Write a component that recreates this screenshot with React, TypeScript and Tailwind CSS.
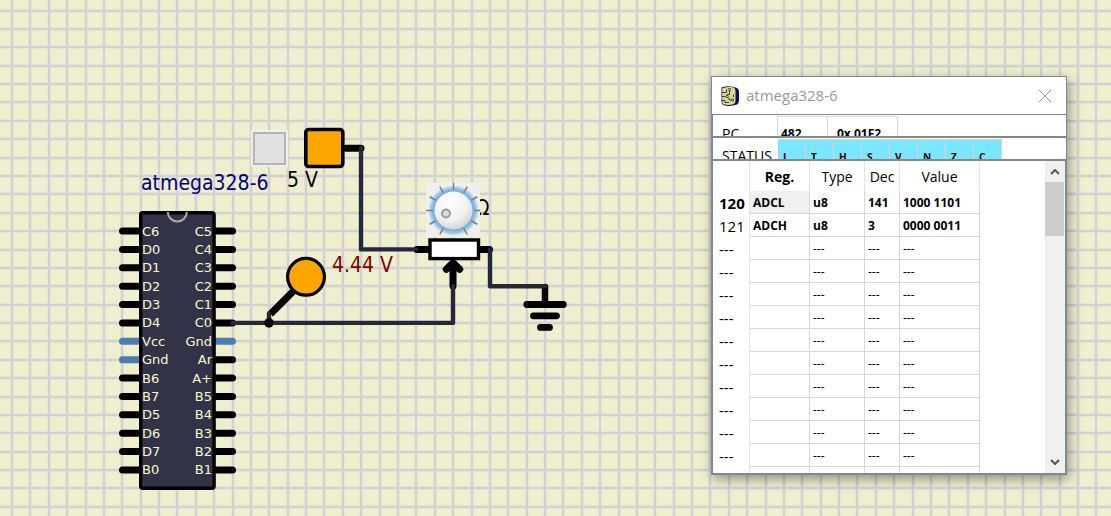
import React from "react";

const PITCH = 18.38;
const FIRST_PIN_Y = 231;

const leftPins = ["C6", "D0", "D1", "D2", "D3", "D4", "Vcc", "Gnd", "B6", "B7", "D5", "D6", "D7", "B0"];
const rightPins = ["C5", "C4", "C3", "C2", "C1", "C0", "Gnd", "Ar", "A+", "B5", "B4", "B3", "B2", "B1"];
const flags = ["I", "T", "H", "S", "V", "N", "Z", "C"];

type Register = { addr: string; name: string; type: string; dec: string; value: string };

const blank: Register = { addr: "---", name: "", type: "---", dec: "---", value: "---" };
const registers: Register[] = [
  { addr: "120", name: "ADCL", type: "u8", dec: "141", value: "1000 1101" },
  { addr: "121", name: "ADCH", type: "u8", dec: "3", value: "0000 0011" },
  ...Array.from({ length: 10 }, () => blank),
  { addr: "", name: "", type: "", dec: "", value: "" },
];

const pinY = (index: number) => FIRST_PIN_Y + index * PITCH;
const pinColor = (label: string) => (label === "Vcc" || label === "Gnd" ? "#4b7bb0" : "#000");

function Chip() {
  return (
    <g className="font-['DejaVu_Sans',sans-serif]">
      <g strokeWidth="7" strokeLinecap="round">
        {leftPins.map((p, i) => (
          <path key={i} d={`M142 ${pinY(i)}H122.5`} stroke={pinColor(p)} />
        ))}
        {rightPins.map((p, i) => (
          <path key={i} d={`M212 ${pinY(i)}H232.5`} stroke={pinColor(p)} />
        ))}
      </g>
      <rect x="140.7" y="212.7" width="73.4" height="275.6" rx="2" fill="#333347" stroke="#000" strokeWidth="3.4" />
      <path d="M167.8 212a9.5 9.5 0 0 0 19 0" fill="none" stroke="#b3ad9b" strokeWidth="2" />
      <g fill="#fafad2" className="text-[13px]">
        {leftPins.map((p, i) => (
          <text key={i} x="142" y={Math.floor(pinY(i)) + 5}>
            {p}
          </text>
        ))}
        {rightPins.map((p, i) => (
          <text key={i} x="212" y={Math.floor(pinY(i)) + 5} textAnchor="end">
            {p}
          </text>
        ))}
      </g>
    </g>
  );
}

function Grid() {
  const columns = Array.from({ length: 220 }, (_, i) => Math.round(11 + (i - 0) * PITCH));
  const rows = Array.from({ length: 120 }, (_, i) => Math.round(9.6 + (i - 0) * PITCH));
  const lines = columns.map((x) => `M${x + 1} 0V2200`).join("") + rows.map((y) => `M0 ${y + 1}H4000`).join("");
  const halo = columns.map((x) => `M${x + 1} 0V2200`).join("") + rows.map((y) => `M0 ${y + 1}H4000`).join("");
  return (
    <g fill="none" shapeRendering="crispEdges">
      <path d={halo} stroke="#e5e5d0" strokeWidth="4" />
      <path d={lines} stroke="#d2d2d2" strokeWidth="2" />
    </g>
  );
}

function Knob() {
  const angles = Array.from({ length: 11 }, (_, i) => -150 + i * 30);
  return (
    <svg viewBox="0 0 54 54" className="block size-[54px]" aria-hidden="true">
      <defs>
        <radialGradient id="glow">
          <stop offset="0.74" stopColor="#6dabd9" />
          <stop offset="0.88" stopColor="#9cc6e4" />
          <stop offset="1" stopColor="#efefef" />
        </radialGradient>
        <radialGradient id="dial" cx="0.4" cy="0.3" r="0.75">
          <stop offset="0" stopColor="#fff" />
          <stop offset="0.6" stopColor="#f1f1f1" />
          <stop offset="1" stopColor="#d2d2d2" />
        </radialGradient>
      </defs>
      <rect width="54" height="54" fill="#efefef" />
      <circle cx="27.5" cy="27.5" r="25.5" fill="url(#glow)" />
      {angles.map((a) => (
        <path key={a} d="M27.5 0V7" stroke="#7c7c7c" strokeWidth="1.5" transform={`rotate(${a} 27.5 27.5)`} />
      ))}
      <circle cx="27.5" cy="27.5" r="19" fill="url(#dial)" />
      <circle cx="20" cy="30.5" r="4" fill="#ddd" stroke="#999" strokeWidth="2" />
    </svg>
  );
}

function Circuit() {
  return (
    <svg className="block h-screen min-h-[516px] w-full" aria-label="Circuit schematic">
      <Grid />
      <Chip />
      <g className="font-['DejaVu_Sans_Condensed','DejaVu_Sans',sans-serif] text-[21px]">
        <text x="141" y="190" fill="#000080">atmega328-6</text>
        <text x="287" y="187">5 V</text>
        <text x="332" y="272" fill="#800000">4.44 V</text>
        <text x="475" y="215">Ω</text>
      </g>
      <g fill="none" stroke="#000" strokeWidth="7" strokeLinecap="round" strokeLinejoin="round">
        <path d="M346 148.2H361" />
        <path d="M417 249.4H428M480 249.4H489.5" />
        <path d="M453 286V263M446.3 269.3L453 262.6L459.7 269.3" />
        <path d="M545 287V304" strokeWidth="6.5" />
        <path d="M526.8 304.5H563.3M533.5 315.8H556.5M540.5 327.4H549.5" strokeWidth="6.8" />
        <path d="M270.5 314L293 291.5" strokeLinecap="butt" />
      </g>
      <g fill="none" stroke="#27273b" strokeWidth="4.4" strokeLinecap="round" strokeLinejoin="round">
        <path d="M361 148.2V249.4H416" />
        <path d="M490 249.4V286.2H545" />
        <path d="M232.5 322.9H453V286" />
        <path d="M269 322.9V313.5" />
      </g>
      <circle cx="269" cy="322.9" r="4.8" />
      <rect x="305.8" y="129.5" width="37" height="37" rx="3" fill="#ffa500" stroke="#000" strokeWidth="3.6" />
      <circle cx="306" cy="276.8" r="18.4" fill="#ffa500" stroke="#000" strokeWidth="3.2" />
      <rect x="430" y="240" width="48.5" height="18.6" fill="#fff" stroke="#000" strokeWidth="3.4" />
    </svg>
  );
}

function AppIcon() {
  return (
    <svg viewBox="0 0 20 20" className="size-5" aria-hidden="true">
      <path d="M1.5 1.5Q10-1 17 2Q19 3 19 6V14Q19 17 17 18.5Q10 21 3 19Q1.5 18 1.5 16Z" fill="#130e40" />
      <path d="M2.2 2.2Q9-.2 13 1.2Q15.5 2 15.5 5V15Q15.5 18 13 18.6Q8 19.4 3 18.2Q2.2 17 2.2 15Z" fill="#d9d991" />
      <path
        d="M2 6.5H6.5V3.5M9.5 2V8.5H7M2 10.5H6M2 14.5H5V16.5H9M9 11.5V14H11.5M13.5 11V8.5"
        fill="none"
        stroke="#2c2850"
        strokeWidth="0.9"
      />
      <g fill="#d9d991" stroke="#2c2850" strokeWidth="0.8">
        <circle cx="9.5" cy="3.5" r="1.2" />
        <circle cx="7" cy="10.5" r="1.2" />
        <circle cx="12.5" cy="14" r="1.2" />
      </g>
    </svg>
  );
}

function Chevron({ down = false }: { down?: boolean }) {
  return (
    <svg viewBox="0 0 10 6" className="h-[6px] w-[10px]" fill="none" stroke="#555" strokeWidth="2" aria-hidden="true">
      <path d={down ? "M1 1L5 5L9 1" : "M1 5L5 1L9 5"} />
    </svg>
  );
}

function ScrollBar() {
  return (
    <div className="flex w-[20px] flex-col bg-[#f0f0f0]">
      <button aria-label="Scroll up" className="flex h-[21px] items-center justify-center">
        <Chevron />
      </button>
      <div className="mr-px h-[54px] bg-[#cdcdcd]" />
      <div className="grow" />
      <button aria-label="Scroll down" className="flex h-[22px] items-center justify-center">
        <Chevron down />
      </button>
    </div>
  );
}

function RegisterTable() {
  const head = "border-r border-[#e5e5e5] pt-[2px]";
  const cell = "border-r border-b border-[#d8d8d8] px-[3px] pt-[2px] text-xs leading-[20px]";
  const rowHead = "border-r border-[#e5e5e5] pl-[6px] text-[15px] leading-[22px]";
  return (
    <table className="w-[267px] table-fixed border-separate border-spacing-0 text-left whitespace-nowrap">
      <colgroup>
        <col className="w-[37px]" />
        <col className="w-[60px]" />
        <col className="w-[55px]" />
        <col className="w-[35px]" />
        <col className="w-[80px]" />
      </colgroup>
      <thead>
        <tr className="h-[30px] text-center text-sm">
          <th className={head} />
          <th className={`${head} font-bold`}>Reg.</th>
          <th className={`${head} font-normal`}>Type</th>
          <th className={`${head} font-normal`}>Dec</th>
          <th className={`${head} font-normal`}>Value</th>
        </tr>
      </thead>
      <tbody>
        {registers.map((r, i) => (
          <tr key={i} className={i < 2 ? "h-[23px] font-bold" : "h-[23px]"}>
            <th className={i === 0 ? `${rowHead} font-bold` : `${rowHead} font-normal`}>{r.addr}</th>
            <td className={i === 0 ? `${cell} bg-[#f0f0f0]` : cell}>{r.name}</td>
            <td className={cell}>{r.type}</td>
            <td className={cell}>{r.dec}</td>
            <td className={cell}>{r.value}</td>
          </tr>
        ))}
      </tbody>
    </table>
  );
}

function MonitorWindow() {
  return (
    <section
      aria-label="Register monitor"
      className="absolute top-[76px] left-[711px] flex h-[399px] w-[356px] flex-col border border-[#85888c] bg-white font-['Open_Sans','Noto_Sans',sans-serif] shadow-[2px_4px_12px_rgba(0,0,0,0.4)]"
    >
      <header className="flex h-[37px] shrink-0 items-center pr-[14px] pl-2">
        <AppIcon />
        <h1 className="ml-[6px] grow text-[15px] text-[#999]">atmega328-6</h1>
        <button aria-label="Close">
          <svg viewBox="0 0 14 14" className="size-[14px]" stroke="#999" aria-hidden="true">
            <path d="M1 1L13 13M13 1L1 13" />
          </svg>
        </button>
      </header>

      <div className="flex h-[24px] shrink-0 overflow-hidden border-t border-b-2 border-l border-[#828790] pt-px">
        <div className="w-[64px] pt-[8px] pl-[9px] text-sm">PC</div>
        <div className="w-[51px] border-x border-t border-[#d8d8d8] pt-[7px] pl-[3px] text-xs leading-5 font-bold">482</div>
        <div className="w-[70px] border-t border-r border-[#d8d8d8] pt-[7px] pl-[9px] text-xs leading-5 font-bold">0x 01F2</div>
      </div>

      <div className="flex h-[23px] shrink-0 overflow-hidden border-b-2 border-l border-[#828790] pt-px">
        <div className="w-[65px] pt-[7px] pl-[9px] text-sm">STATUS</div>
        {flags.map((f) => (
          <div key={f} className="h-[30px] w-[28px] border-t border-r border-[#c9d8dc] bg-[#7ae6ff] pt-[9px] pl-[5px] text-[10px] leading-4 font-bold">
            {f}
          </div>
        ))}
      </div>

      <div className="flex min-h-0 grow overflow-hidden border-r border-b border-l border-[#828790]">
        <div className="grow overflow-hidden">
          <RegisterTable />
        </div>
        <ScrollBar />
      </div>
    </section>
  );
}

export default function App() {
  return (
    <main className="relative min-h-screen overflow-hidden bg-[#efefd0] text-black">
      <Circuit />
      <button
        aria-label="Toggle power"
        className="absolute top-[130px] left-[251px] flex size-[37px] items-center justify-center bg-[#eee] p-[2px]"
      >
        <span className="size-full border-2 border-[#b4b4b4] bg-[#e1e1e1]" />
      </button>
      <div className="absolute top-[183px] left-[426px] size-[54px]">
        <Knob />
        <input
          type="range"
          aria-label="Potentiometer"
          className="absolute inset-0 size-full cursor-pointer appearance-none opacity-0"
        />
      </div>
      <MonitorWindow />
    </main>
  );
}
